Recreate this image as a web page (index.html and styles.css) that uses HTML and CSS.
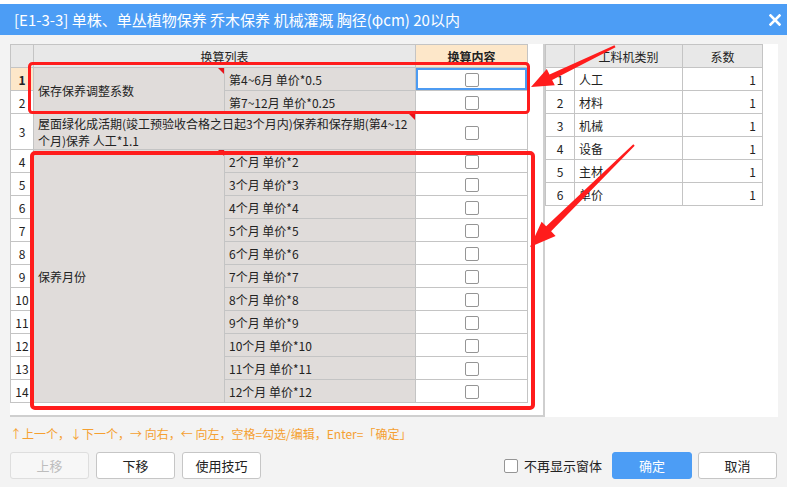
FILE: index.html
```html
<!DOCTYPE html>
<html lang="zh">
<head>
<meta charset="utf-8">
<title>换算</title>
<link rel="stylesheet" href="styles.css">
</head>
<body>
<div class="dialog">
  <div class="titlebar">
    <span class="title">[E1-3-3] 单株、单丛植物保养 乔木保养 机械灌溉 胸径(φcm) 20以内</span>
    <svg class="close" width="12" height="12" viewBox="0 0 12 12"><path d="M1.5 1.5 L10.5 10.5 M10.5 1.5 L1.5 10.5" stroke="#fff" stroke-width="2.6" stroke-linecap="square"/></svg>
  </div>
  <div class="content">
    <div class="left-pane">
      <table class="grid lgrid">
        <colgroup><col class="c-no"><col class="c-a"><col class="c-b"><col class="c-cb"></colgroup>
        <tr class="hdr"><th class="corner"></th><th colspan="2" class="h-list">换算列表</th><th class="h-sel">换算内容</th></tr>
        <tr><td class="no cur">1</td><td class="name mk mid" rowspan="2">保存保养调整系数</td><td class="name">第4~6月 单价*0.5</td><td class="cb focus"><span class="box"></span></td></tr>
        <tr><td class="no">2</td><td class="name">第7~12月 单价*0.25</td><td class="cb"><span class="box"></span></td></tr>
        <tr class="tall"><td class="no">3</td><td class="name mk wrap" colspan="2"><span class="ln">屋面绿化成活期(竣工预验收合格之日起3个月内)保养和保存期(第4~12</span><span class="ln">个月)保养 人工*1.1</span></td><td class="cb"><span class="box"></span></td></tr>
        <tr><td class="no">4</td><td class="name mk mid" rowspan="11">保养月份</td><td class="name">2个月 单价*2</td><td class="cb"><span class="box"></span></td></tr>
        <tr><td class="no">5</td><td class="name">3个月 单价*3</td><td class="cb"><span class="box"></span></td></tr>
        <tr><td class="no">6</td><td class="name">4个月 单价*4</td><td class="cb"><span class="box"></span></td></tr>
        <tr><td class="no">7</td><td class="name">5个月 单价*5</td><td class="cb"><span class="box"></span></td></tr>
        <tr><td class="no">8</td><td class="name">6个月 单价*6</td><td class="cb"><span class="box"></span></td></tr>
        <tr><td class="no">9</td><td class="name">7个月 单价*7</td><td class="cb"><span class="box"></span></td></tr>
        <tr><td class="no">10</td><td class="name">8个月 单价*8</td><td class="cb"><span class="box"></span></td></tr>
        <tr><td class="no">11</td><td class="name">9个月 单价*9</td><td class="cb"><span class="box"></span></td></tr>
        <tr><td class="no">12</td><td class="name">10个月 单价*10</td><td class="cb"><span class="box"></span></td></tr>
        <tr><td class="no">13</td><td class="name">11个月 单价*11</td><td class="cb"><span class="box"></span></td></tr>
        <tr><td class="no">14</td><td class="name">12个月 单价*12</td><td class="cb"><span class="box"></span></td></tr>
      </table>
    </div>
    <div class="right-pane">
      <table class="grid rgrid">
        <colgroup><col class="r-no"><col class="r-type"><col class="r-val"></colgroup>
        <tr class="hdr"><th></th><th>工料机类别</th><th>系数</th></tr>
        <tr><td class="no">1</td><td class="txt">人工</td><td class="num">1</td></tr>
        <tr><td class="no">2</td><td class="txt">材料</td><td class="num">1</td></tr>
        <tr><td class="no">3</td><td class="txt">机械</td><td class="num">1</td></tr>
        <tr><td class="no">4</td><td class="txt">设备</td><td class="num">1</td></tr>
        <tr><td class="no">5</td><td class="txt">主材</td><td class="num">1</td></tr>
        <tr><td class="no">6</td><td class="txt">单价</td><td class="num">1</td></tr>
      </table>
    </div>
  </div>
  <div class="hint">↑上一个，↓下一个，→ 向右，← 向左，空格=勾选/编辑，Enter=「确定」</div>
  <div class="footer">
    <button class="btn disabled">上移</button>
    <button class="btn">下移</button>
    <button class="btn">使用技巧</button>
    <div class="spacer"></div>
    <label class="chk"><span class="box"></span>不再显示窗体</label>
    <button class="btn primary">确定</button>
    <button class="btn">取消</button>
  </div>
</div>
<svg class="marks" width="789" height="487" viewBox="0 0 789 487">
  <rect x="29.5" y="63.5" width="499" height="49" rx="3" fill="none" stroke="#ff1c1c" stroke-width="3"/>
  <rect x="32" y="153" width="501" height="255" rx="3" fill="none" stroke="#ff1c1c" stroke-width="4"/>
  <polygon fill="#ff1c1c" points="614.5,45.3 549.5,74.5 546.8,69.1 531,87 554.8,85.3 552.1,79.9 615.5,47.2"/>
  <polygon fill="#ff1c1c" points="633.3,144.3 546.2,226.3 541.6,221.7 530,247 555.6,236 551.1,231.3 634.7,145.7"/>
</svg>
</body>
</html>
```

FILE: styles.css
```css
* { box-sizing: border-box; }
html, body { margin: 0; padding: 0; }
body {
  width: 789px;
  height: 487px;
  overflow: hidden;
  position: relative;
  background: #ffffff;
  font-family: "Noto Sans CJK SC", "Noto Sans", sans-serif;
  color: #222;
}
.dialog {
  width: 787px;
  height: 483px;
  margin-top: 4px;
  background: #f3f3f3;
  display: flex;
  flex-direction: column;
}
.titlebar {
  flex: none;
  height: 31px;
  background: #4c9df5;
  color: #fff;
  display: flex;
  align-items: center;
  justify-content: space-between;
  padding: 0 6px 0 14px;
  font-size: 15px;
}
.title { line-height: 20px; white-space: nowrap; }
.close { display: block; }

.content {
  flex: none;
  display: flex;
  margin: 9px 9px 0 10px;
  height: 373px;
  background: #fff;
}
.left-pane {
  width: 535px;
  border-right: 2px solid #cfcfcf;
  border-bottom: 2px solid #cfcfcf;
}
.right-pane { flex: 1; }

.grid {
  border-collapse: collapse;
  table-layout: fixed;
  font-size: 12px;
  line-height: 15px;
  color: #222;
}
.grid th, .grid td {
  border: 1px solid #c4c4c4;
  padding: 0;
  height: 23px;
  white-space: nowrap;
  overflow: hidden;
}
.grid th { font-weight: normal; background: #e8e8e8; color: #222; text-align: center; }
.lgrid { width: 517px; }
.c-no { width: 23px; }
.c-a { width: 191px; }
.c-b { width: 191px; }
.c-cb { width: 112px; }
.lgrid .h-sel { background: #fde7c9; font-weight: bold; }
.lgrid .corner { background: #e8e8e8; }
.no { text-align: center; background: #fff; }
.no.cur { background: #fde7c9; font-weight: bold; }
.name { background: #e0dcda; padding: 0 4px !important; text-align: left; }
.mid { vertical-align: middle; }
.wrap .ln { display: block; height: 17px; line-height: 17px; }
.tall td { height: 36px; }
.mk { position: relative; }
.mk::after {
  content: "";
  position: absolute;
  top: 0;
  right: 0;
  border-top: 6px solid #e8141c;
  border-left: 6px solid transparent;
}
.cb { background: #fff; text-align: center; }
.cb.focus { box-shadow: inset 0 0 0 2px #4d9bf2; }
.box {
  display: inline-block;
  width: 14px;
  height: 14px;
  border: 1px solid #959595;
  border-radius: 2px;
  background: #fff;
  vertical-align: middle;
}

.rgrid { width: 217px; }
.r-no { width: 29px; }
.r-type { width: 108px; }
.r-val { width: 80px; }
.rgrid .txt { padding-left: 4px; }
.rgrid .num { text-align: right; padding-right: 6px; }

.hint {
  flex: none;
  margin: 8px 10px 0;
  height: 17px;
  line-height: 17px;
  font-size: 12px;
  color: #f5a031;
  white-space: nowrap;
}
.footer {
  flex: none;
  display: flex;
  align-items: center;
  height: 27px;
  margin: 10px 10px 0;
}
.spacer { flex: 1; }
.btn {
  width: 79px;
  height: 27px;
  margin-right: 7px;
  border: 1px solid #c6c6c6;
  border-radius: 3px;
  background: #fff;
  font-family: "Noto Sans CJK SC", sans-serif;
  font-size: 13px;
  color: #222;
  padding: 0;
}
.btn:last-child { margin-right: 0; }
.btn.disabled { color: #bdbdbd; border-color: #dedede; background: #f7f7f7; }
.btn.primary {
  width: 80px;
  margin-right: 6px;
  background: #4c9df5;
  border-color: #4c9df5;
  color: #fff;
}
.chk {
  display: flex;
  align-items: center;
  font-size: 13px;
  color: #222;
  margin-right: 10px;
}
.chk .box { width: 14px; height: 14px; margin-right: 6px; }

.marks {
  position: absolute;
  left: 0;
  top: 0;
  pointer-events: none;
}
```
